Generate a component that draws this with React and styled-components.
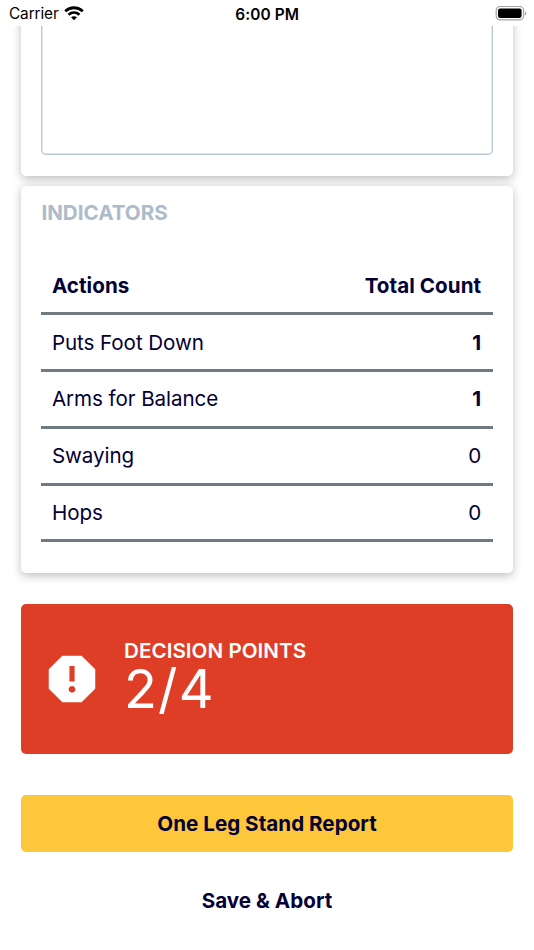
import React from 'react'
import styled, { createGlobalStyle } from 'styled-components'
import { MdReport } from 'react-icons/md'

const GlobalStyle = createGlobalStyle`
    * {
        box-sizing: border-box;
    }
    body {
        margin: 0;
        background: #fff;
        color: #030035;
        font-family: Inter, 'Liberation Sans', sans-serif;
        font-size: 20.6px;
        overflow: hidden;
    }
`

const Screen = styled.div`
    display: flex;
    flex-direction: column;
    width: 534px;
    height: 950px;
`

const StatusBar = styled.header`
    display: grid;
    grid-template-columns: 1fr auto 1fr;
    align-items: center;
    flex: none;
    height: 26px;
    padding: 1px 7px 0 9px;
    color: #000;
    font-size: 15.4px;
`

const Carrier = styled.div`
    display: flex;
    align-items: center;
    gap: 5px;
    letter-spacing: -0.12px;
`

const Clock = styled.div`
    padding: 1px 1.5px 0 0;
    font-weight: 600;
    letter-spacing: 0.1px;
`

const Battery = styled.svg`
    justify-self: end;
`

const Content = styled.main`
    display: flex;
    flex-direction: column;
    flex: 1;
    min-height: 0;
    padding: 0 21px;
    overflow: hidden;
`

const Card = styled.section`
    flex: none;
    margin-bottom: 10px;
    padding: 0 20.4px;
    border-radius: 5px;
    background: #fff;
    box-shadow: 0 2.5px 10px rgba(0, 0, 0, 0.25);
`

const NotesCard = styled(Card)`
    height: 170px;
    margin-top: -20px;
    padding-bottom: 21px;
`

const Notes = styled.div`
    height: 100%;
    border-radius: 5px;
    box-shadow: inset 0 0 0 1.4px #bac7d5;
`

const IndicatorsCard = styled(Card)`
    height: 387px;
    margin-bottom: 31px;
    padding-top: 13.5px;
`

const Title = styled.h2`
    margin: 0 0 34px;
    color: #adbbcb;
    font-size: 20.6px;
    font-weight: 700;
    line-height: 25px;
`

const Row = styled.div`
    display: flex;
    align-items: center;
    justify-content: space-between;
    height: 56.75px;
    padding: 0 11.5px 0 10.5px;
    border-bottom: 3px solid #6f7a83;
    font-weight: ${props => (props.$header ? 700 : 400)};
    letter-spacing: ${props => (props.$header ? '0.05px' : '-0.07px')};
`

const Count = styled.span`
    font-weight: ${props => (props.$active ? 700 : 'inherit')};
`

const Decision = styled.section`
    display: flex;
    flex: none;
    height: 150px;
    margin-bottom: 41px;
    padding-left: 20.4px;
    border-radius: 5px;
    background: #de3e26;
    color: #fff;
`

const ReportIcon = styled(MdReport)`
    margin-top: 44px;
    font-size: 62px;
`

const Points = styled.div`
    padding: 34px 0 0 20.6px;
`

const PointsLabel = styled.div`
    font-weight: 600;
    letter-spacing: 0.05px;
    line-height: 25px;
`

const Score = styled.div`
    font-size: 54px;
    font-weight: 400;
    letter-spacing: 1.2px;
    line-height: 51px;
`

const Button = styled.button`
    flex: none;
    height: 57px;
    border: 0;
    border-radius: 5px;
    background: ${props => (props.$primary ? '#fdc73c' : 'transparent')};
    color: inherit;
    font: inherit;
    font-weight: 700;
    letter-spacing: 0.03px;
`

const AbortButton = styled(Button)`
    margin-top: 19.5px;
`

const indicators = [
    { name: 'Puts Foot Down', count: 1 },
    { name: 'Arms for Balance', count: 1 },
    { name: 'Swaying', count: 0 },
    { name: 'Hops', count: 0 },
]

const WifiIcon = () => (
    <svg width="20" height="15" viewBox="0 0 20 15" fill="none" stroke="#000" strokeWidth="2.8">
        <path d="M1.2 5.2C6.2.6 13.8.6 18.8 5.2" />
        <path d="M4.5 8.7C7.7 5.9 12.3 5.9 15.5 8.7" />
        <path d="M10 14.3 7 11.3C8.7 9.8 11.3 9.8 13 11.3Z" fill="#000" stroke="none" />
    </svg>
)

const BatteryIcon = () => (
    <Battery width="32" height="15" viewBox="0 0 32 15">
        <rect x="1.2" y="0.5" width="27.4" height="13.4" rx="4" fill="none" stroke="#a3a3a3" strokeWidth="1.2" />
        <rect x="3" y="2.4" width="23.6" height="9.6" rx="2.2" fill="#000" />
        <path d="M30 5.2c1.9.8 1.9 3.6 0 4.4z" fill="#a3a3a3" />
    </Battery>
)

const App = () => {
    return (
        <Screen>
            <GlobalStyle />
            <StatusBar>
                <Carrier>
                    Carrier
                    <WifiIcon />
                </Carrier>
                <Clock>6:00 PM</Clock>
                <BatteryIcon />
            </StatusBar>
            <Content>
                <NotesCard>
                    <Notes />
                </NotesCard>
                <IndicatorsCard>
                    <Title>INDICATORS</Title>
                    <Row $header>
                        <span>Actions</span>
                        <span>Total Count</span>
                    </Row>
                    {indicators.map(item => (
                        <Row key={item.name}>
                            <span>{item.name}</span>
                            <Count $active={item.count > 0}>{item.count}</Count>
                        </Row>
                    ))}
                </IndicatorsCard>
                <Decision>
                    <ReportIcon />
                    <Points>
                        <PointsLabel>DECISION POINTS</PointsLabel>
                        <Score>2/4</Score>
                    </Points>
                </Decision>
                <Button $primary>One Leg Stand Report</Button>
                <AbortButton>Save &amp; Abort</AbortButton>
            </Content>
        </Screen>
    )
}

export default App
